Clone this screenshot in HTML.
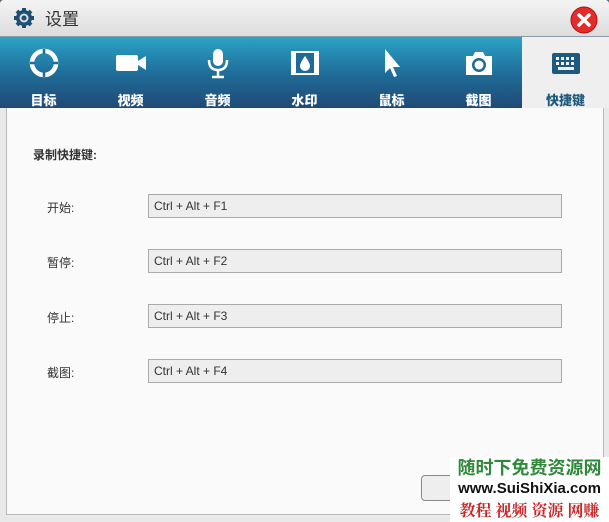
<html><head><style>
body{margin:0;width:609px;height:522px;overflow:hidden;font-family:"Liberation Sans","Noto Sans CJK SC",sans-serif;background:#5a6a78}
.win{position:absolute;left:0;top:0;width:609px;height:522px;background:#e9e9e9;border-radius:4px 4px 0 0;overflow:hidden}
.title{position:absolute;left:0;top:0;width:609px;height:36px;background:linear-gradient(#f4f4f4,#dcdcdc);border-bottom:1px solid #8a9aa8}
.title span{position:absolute;left:45px;top:5px;font-size:17px;color:#333}
.tabs{position:absolute;left:0;top:37px;width:609px;height:71px;background:linear-gradient(#2aa3c6,#1f6a96 55%,#214a76)}
.tab{position:absolute;top:0;width:87px;height:71px;text-align:center;color:#fff;font-weight:bold;font-size:13px}
.tab svg{position:absolute;left:28px;top:10px}
.tab b{position:absolute;left:0;right:0;top:53px}
.act{background:#efefef;color:#1e5a80;left:522px}
.content{position:absolute;left:6px;top:108px;width:596px;height:406px;background:#fafafa;border-left:1px solid #bbb;border-right:1px solid #bbb;border-bottom:1px solid #bbb}
.lbl{position:absolute;font-size:12px;color:#333}
.inp{position:absolute;left:148px;width:412px;height:22px;border:1px solid #aaa;background:#eeeeee;font-size:12px;color:#333;line-height:22px;text-indent:5px}
</style></head><body><div class="win">
<div class="title">
<svg style="position:absolute;left:13px;top:7px" width="22" height="22" viewBox="0 0 22 22"><circle cx="11" cy="11" r="8" fill="#1d4f73"/><g stroke="#1d4f73" stroke-width="4"><line x1="11" y1="1" x2="11" y2="21"/><line x1="1" y1="11" x2="21" y2="11"/><line x1="4" y1="4" x2="18" y2="18"/><line x1="18" y1="4" x2="4" y2="18"/></g><circle cx="11" cy="11" r="4.5" fill="#dcdcdc"/><circle cx="11" cy="11" r="2.5" fill="#1d4f73"/></svg>
<span>设置</span>
<svg style="position:absolute;left:570px;top:6px" width="28" height="28" viewBox="0 0 28 28"><circle cx="14" cy="14" r="13" fill="#e52b2b" stroke="#b01010"/><path d="M9 9L19 19M19 9L9 19" stroke="#fff" stroke-width="3.5" stroke-linecap="round"/></svg>
</div>
<div class="tabs">
<div class="tab" style="left:0"><svg width="32" height="32" viewBox="0 0 32 32"><circle cx="16" cy="16" r="12" fill="none" stroke="#fff" stroke-width="4.5"/><g stroke="#1f6a96" stroke-width="2.5"><line x1="16" y1="2" x2="16" y2="7"/><line x1="16" y1="25" x2="16" y2="30"/><line x1="2" y1="16" x2="7" y2="16"/><line x1="25" y1="16" x2="30" y2="16"/></g></svg><b>目标</b></div>
<div class="tab" style="left:87px"><svg width="32" height="32" viewBox="0 0 32 32"><rect x="1" y="8" width="22" height="16" rx="2" fill="#fff"/><path d="M23 14L31 9V23L23 18Z" fill="#fff"/></svg><b>视频</b></div>
<div class="tab" style="left:174px"><svg width="32" height="32" viewBox="0 0 32 32"><rect x="11" y="2" width="10" height="17" rx="5" fill="#fff"/><path d="M7 13Q7 23 16 23Q25 23 25 13" fill="none" stroke="#fff" stroke-width="2.5"/><path d="M16 23V29M10 30H22" stroke="#fff" stroke-width="2.5"/></svg><b>音频</b></div>
<div class="tab" style="left:261px"><svg width="32" height="32" viewBox="0 0 32 32"><rect x="2" y="4" width="28" height="24" fill="#fff"/><rect x="7" y="6" width="18" height="20" fill="#1f6a96"/><path d="M16 9Q11 16 11 19A5 5 0 0 0 21 19Q21 16 16 9Z" fill="#fff"/></svg><b>水印</b></div>
<div class="tab" style="left:348px"><svg width="32" height="32" viewBox="0 0 32 32"><path d="M9 2V26L14 21L18 30L21 29L17 20H24Z" fill="#fff"/></svg><b>鼠标</b></div>
<div class="tab" style="left:435px"><svg width="32" height="32" viewBox="0 0 32 32"><path d="M3 9H10L12 5H20L22 9H29V28H3Z" fill="#fff"/><circle cx="16" cy="18" r="7" fill="#1f6a96"/><circle cx="16" cy="18" r="4.5" fill="#fff"/></svg><b>截图</b></div>
<div class="tab act"><svg width="32" height="32" viewBox="0 0 32 32"><rect x="2" y="6" width="28" height="21" rx="2" fill="#1e5a80"/><g fill="#efefef"><rect x="6" y="10" width="3" height="3"/><rect x="11" y="10" width="3" height="3"/><rect x="16" y="10" width="3" height="3"/><rect x="21" y="10" width="3" height="3"/><rect x="6" y="15" width="3" height="3"/><rect x="11" y="15" width="3" height="3"/><rect x="16" y="15" width="3" height="3"/><rect x="21" y="15" width="3" height="3"/><rect x="8" y="20" width="16" height="3"/></g></svg><b>快捷键</b></div>
</div>
<div class="content"></div>
<div class="lbl" style="left:33px;top:146px;font-weight:bold">录制快捷键:</div>
<div class="lbl" style="left:47px;top:199px">开始:</div>
<div class="lbl" style="left:47px;top:254px">暂停:</div>
<div class="lbl" style="left:47px;top:309px">停止:</div>
<div class="lbl" style="left:47px;top:364px">截图:</div>
<div class="inp" style="top:194px">Ctrl + Alt + F1</div>
<div class="inp" style="top:249px">Ctrl + Alt + F2</div>
<div class="inp" style="top:304px">Ctrl + Alt + F3</div>
<div class="inp" style="top:359px">Ctrl + Alt + F4</div>
<div style="position:absolute;left:421px;top:475px;width:60px;height:24px;border:1px solid #888;border-radius:4px;background:#eee"></div>
<div style="position:absolute;left:450px;top:457px;width:159px;height:65px;background:#fff;font-weight:bold">
<div style="color:#2e8a3a;font-size:18px;line-height:22px;text-align:center">随时下免费资源网</div>
<div style="color:#111;font-size:15px;line-height:20px;text-align:center">www.SuiShiXia.com</div>
<div style="color:#c8282a;font-size:16px;line-height:22px;text-align:center;font-family:'Noto Serif CJK SC',serif">教程 视频 资源 网赚</div>
</div>
</div></body></html>
